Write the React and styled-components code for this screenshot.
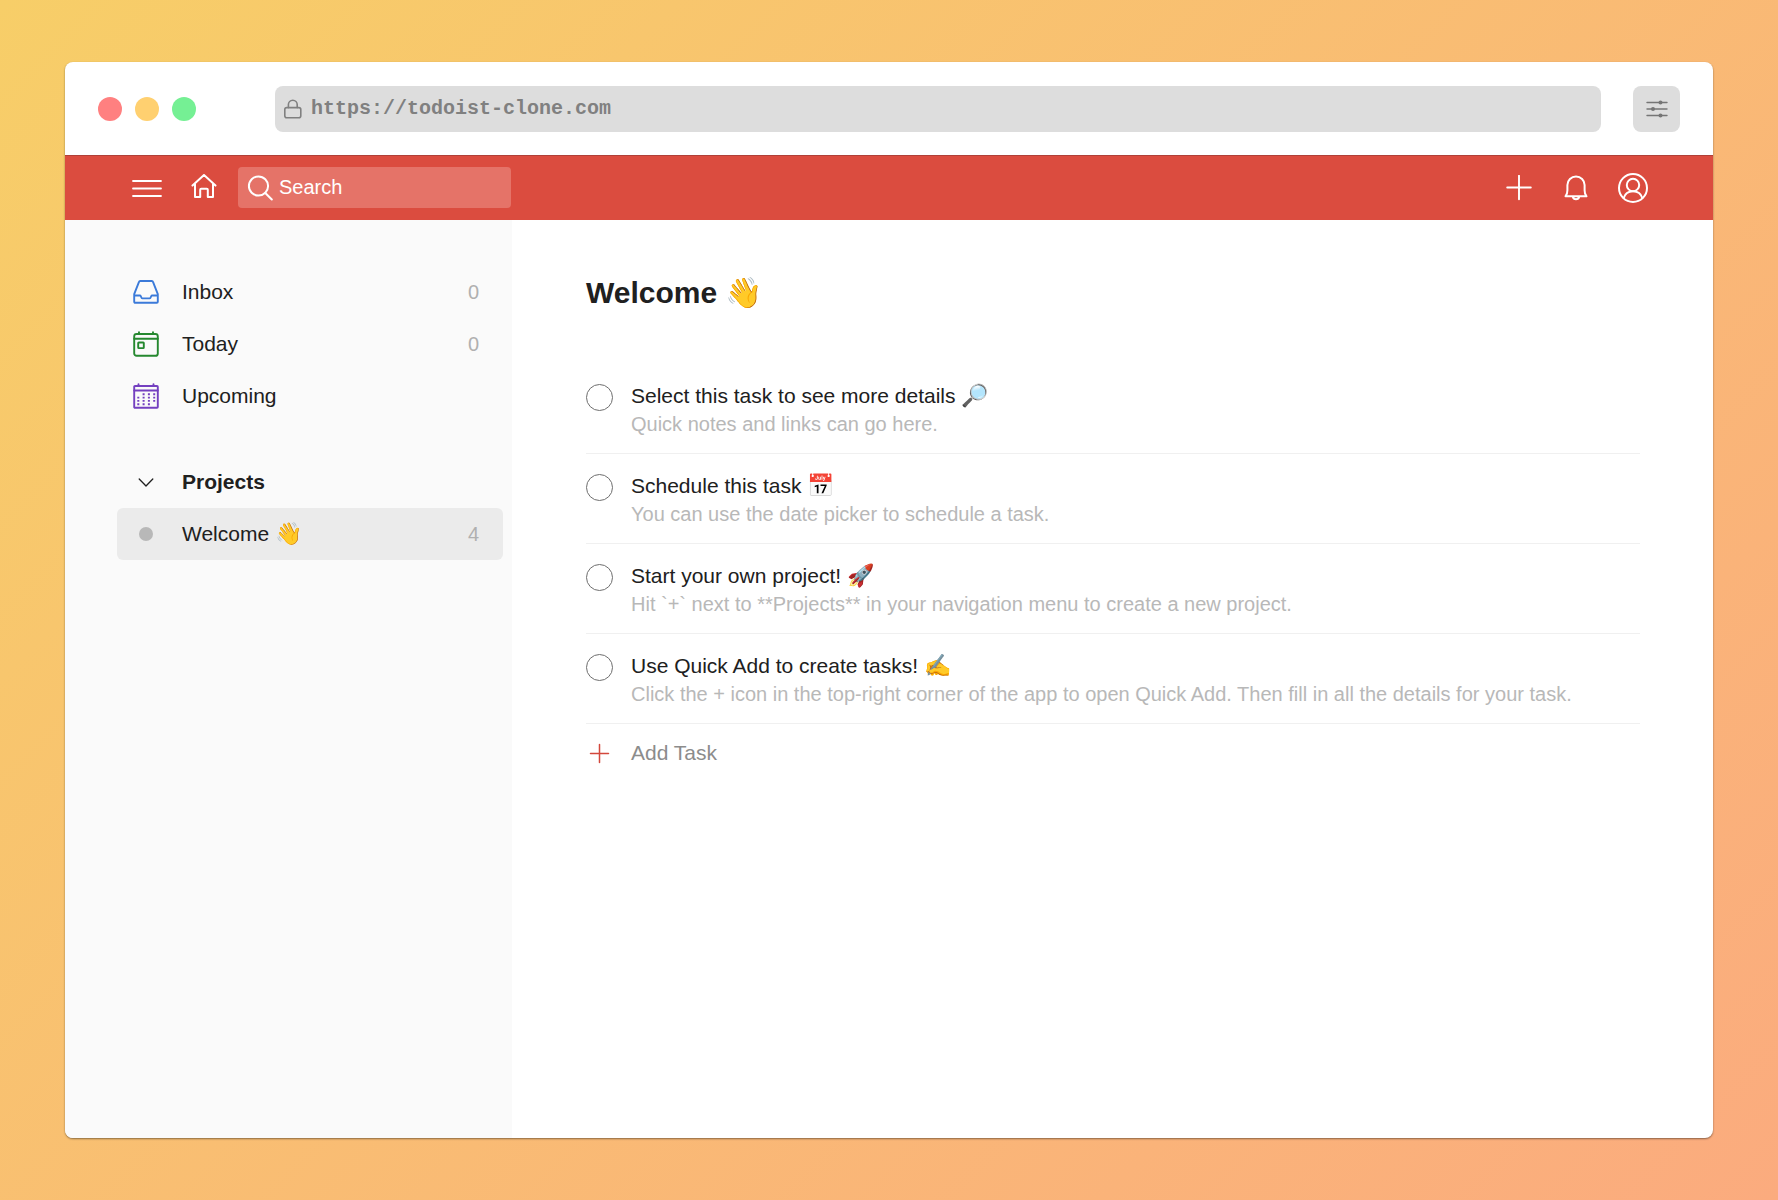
import React from "react";
import styled, { createGlobalStyle } from "styled-components";

const Global = createGlobalStyle`
  *, *::before, *::after { box-sizing: border-box; }
  body { margin: 0; font-family: "Liberation Sans", Arial, sans-serif; color: #202020; }
  button, input { font: inherit; color: inherit; }
  button { border: 0; padding: 0; background: none; cursor: pointer; }
  svg { display: block; }
`;

const Backdrop = styled.div`
  min-height: 100vh;
  padding: 62px 65px;
  display: flex;
  background: linear-gradient(135deg, #f7ce68 0%, #fbab7e 100%);
`;

const Window = styled.div`
  flex: 1;
  min-width: 0;
  display: flex;
  flex-direction: column;
  background: #fff;
  border-radius: 8px;
  overflow: hidden;
  box-shadow: 0 1px 2px rgba(0, 0, 0, 0.45);
`;

const Chrome = styled.div`
  height: 93px;
  padding: 0 33px;
  display: flex;
  align-items: center;
  gap: 32px;
`;

const Lights = styled.div`
  display: flex;
  gap: 13px;
  margin-right: 47px;
`;

const Light = styled.button`
  width: 24px;
  height: 24px;
  border-radius: 50%;
  background: ${(p) => p.$color};
`;

const AddressBar = styled.label`
  flex: 1;
  height: 46px;
  padding: 0 8px;
  display: flex;
  align-items: center;
  gap: 8px;
  background: #ddd;
  border-radius: 8px;
  color: #808080;
`;

const Address = styled.input`
  flex: 1;
  min-width: 0;
  border: 0;
  padding: 0;
  outline: 0;
  background: transparent;
  font-family: "Liberation Mono", "Courier New", monospace;
  font-size: 20px;
  font-weight: 700;
`;

const ChromeButton = styled.button`
  width: 47px;
  height: 46px;
  display: grid;
  place-items: center;
  background: #ddd;
  border-radius: 8px;
  color: #757575;
`;

const TopBar = styled.header`
  height: 65px;
  padding: 0 64px 0 66px;
  display: flex;
  align-items: center;
  background: #db4c3f;
  box-shadow: inset 0 1px 0 #b04038;
  color: #fff;
`;

const IconButton = styled.button`
  width: 32px;
  height: 32px;
  display: grid;
  place-items: center;
`;

const StartTools = styled.div`
  display: flex;
  align-items: center;
  gap: 25px;
`;

const EndTools = styled.div`
  margin-left: auto;
  display: flex;
  align-items: center;
  gap: 25px;
`;

const SearchBox = styled.label`
  width: 273px;
  height: 41px;
  margin-left: 18px;
  padding: 0 9px;
  display: flex;
  align-items: center;
  gap: 6px;
  background: #e57368;
  border-radius: 4px;
`;

const SearchInput = styled.input`
  flex: 1;
  min-width: 0;
  border: 0;
  padding: 0;
  outline: 0;
  background: transparent;
  font-size: 20px;
  &::placeholder { color: #fff; opacity: 1; }
`;

const Body = styled.div`
  flex: 1;
  display: flex;
`;

const Sidebar = styled.nav`
  width: 447px;
  flex-shrink: 0;
  padding: 46px 9px 0 52px;
  background: #fafafa;
`;

const NavList = styled.ul`
  margin: 0 0 34px;
  padding: 0;
  list-style: none;
`;

const NavLink = styled.a`
  height: 52px;
  padding: 0 24px 0 15px;
  display: grid;
  grid-template-columns: 28px 1fr auto;
  column-gap: 22px;
  align-items: center;
  border-radius: 6px;
  background: ${(p) => (p.$active ? "#ebebeb" : "transparent")};
  color: inherit;
  text-decoration: none;
  font-size: 21px;
  & > svg { justify-self: center; }
`;

const Count = styled.span`
  color: #b0b0b0;
  font-size: 20px;
`;

const SectionToggle = styled(NavLink).attrs({ as: "button", type: "button" })`
  width: 100%;
  text-align: left;
  font-weight: 700;
`;

const Dot = styled.span`
  width: 14px;
  height: 14px;
  justify-self: center;
  border-radius: 50%;
  background: #b8b8b8;
`;

const Emoji = styled.span`
  font-size: 22px;
  line-height: 1;
`;

const Main = styled.main`
  flex: 1;
  min-width: 0;
  padding: 53px 73px 0 74px;
`;

const Title = styled.h1`
  margin: 0 0 51px;
  font-size: 30px;
  line-height: 40px;
`;

const TaskList = styled.ul`
  margin: 0;
  padding: 0;
  list-style: none;
`;

const Task = styled.li`
  padding: 17px 0 14px;
  display: flex;
  align-items: flex-start;
  gap: 18px;
  border-bottom: 1px solid #f0f0f0;
`;

const Check = styled.input`
  appearance: none;
  width: 27px;
  height: 27px;
  margin: 3px 0 0;
  flex-shrink: 0;
  border: 1px solid #6e6e6e;
  border-radius: 50%;
`;

const TaskName = styled.label`
  display: block;
  font-size: 21px;
  line-height: 29px;
`;

const TaskNote = styled.p`
  margin: 0;
  color: #b8b8b8;
  font-size: 20px;
  line-height: 29px;
`;

const AddTask = styled.button`
  padding: 13px 0;
  display: flex;
  align-items: center;
  gap: 18px;
  color: #8c8c8c;
  font-size: 21px;
  line-height: 32px;
  & > svg { color: #d3483c; }
`;

const Line = ({ size = 26, w = 2, children, ...rest }) => (
  <svg width={size} height={size} viewBox={`0 0 ${size} ${size}`} fill="none" stroke="currentColor" strokeWidth={w} strokeLinejoin="round" strokeLinecap="round" aria-hidden="true" {...rest}>
    {children}
  </svg>
);

const LockIcon = () => (
  <Line size={20} w={1.6}>
    <rect x="1.8" y="8.6" width="16" height="10.2" rx="2" />
    <path d="M5.4 8.6V5.6a4.4 4.4 0 0 1 8.8 0v3" />
  </Line>
);

const SlidersIcon = () => (
  <Line size={22} w={1.4}>
    <path d="M1 4.500h20M1 11h20M1 17.500h20" />
    <g fill="currentColor" stroke="none">
      <circle cx="14.500" cy="4.500" r="2" />
      <circle cx="7" cy="11" r="2" />
      <circle cx="14.500" cy="17.500" r="2" />
    </g>
  </Line>
);

const MenuIcon = () => (
  <Line size={32} w={1.8}>
    <path d="M2 9h28M2 16.500h28M2 24h28" />
  </Line>
);

const HomeIcon = () => (
  <Line size={28} w={2}>
    <path d="M2.500 11.600 14 1l11.500 10.600M5 10v13h5.200v-7.300a1 1 0 0 1 1-1h5.600a1 1 0 0 1 1 1V23H23V10" />
  </Line>
);

const SearchIcon = () => (
  <Line size={26} w={2}>
    <circle cx="11.500" cy="11" r="9.600" />
    <path d="m18.300 18 6.500 6.500" />
  </Line>
);

const PlusIcon = () => (
  <Line size={26} w={1.9}>
    <path d="M13 .7v23.600M1.200 12.500h23.600" />
  </Line>
);

const BellIcon = () => (
  <Line size={28} w={2}>
    <path d="M3.500 22.300c1.400-1.300 1.900-3 1.900-6v-5.300a8.600 8.600 0 0 1 17.200 0v5.300c0 3 .5 4.700 1.900 6zM10.800 22.800a3.300 3.300 0 0 0 6.400 0" />
  </Line>
);

const UserIcon = () => (
  <Line size={32} w={2}>
    <circle cx="16" cy="16" r="14" />
    <circle cx="16" cy="13" r="6.200" />
    <path d="M6.700 26c1.200-4.200 4.300-6.800 9.300-6.800s8.100 2.600 9.300 6.800" />
  </Line>
);

const InboxIcon = () => (
  <Line size={26} w={1.9} color="#3b7ad9">
    <path d="M1.200 15.200 6 2.900c.2-.6.600-.9 1.200-.9h11.600c.6 0 1 .3 1.200.9l4.800 12.300v7.600a1 1 0 0 1-1 1H2.200a1 1 0 0 1-1-1zM1.200 16.500h6c.8 0 .9 2.900 2 2.900h7.600c1.100 0 1.200-2.900 2-2.900h6" />
  </Line>
);

const TodayIcon = () => (
  <Line size={26} w={1.9} color="#25882f">
    <rect x="1.200" y="3" width="23.600" height="21.800" rx="2.400" />
    <path d="M1.200 7.800h23.600M6 1.200v1.500M20 1.200v1.500" />
    <rect x="5.200" y="11.500" width="5.600" height="5.600" rx=".6" />
  </Line>
);

const UpcomingIcon = () => (
  <Line size={26} w={1.9} color="#7440c0">
    <rect x="1.200" y="3" width="23.600" height="21.800" rx=".8" />
    <path d="M1.200 7.500h23.600M5.500 1.200v1.500M20.500 1.200v1.500" />
    <path strokeLinecap="butt" strokeDasharray="2 3.300" d="M9.600 11.300h13M4.300 14.600h18.300M4.300 17.900h18.300M4.300 21.300h13" />
  </Line>
);

const ChevronIcon = () => (
  <Line size={16} w={1.300}>
    <path d="m1.200 5 6.800 7 6.800-7" />
  </Line>
);

const AddIcon = () => (
  <Line size={27} w={1.500}>
    <path d="M13.500 4.500v18M4.500 13.500h18" />
  </Line>
);

const NAV = [
  { name: "Inbox", Icon: InboxIcon, count: 0 },
  { name: "Today", Icon: TodayIcon, count: 0 },
  { name: "Upcoming", Icon: UpcomingIcon },
];

const TASKS = [
  { name: "Select this task to see more details", emoji: "🔎", note: "Quick notes and links can go here." },
  { name: "Schedule this task", emoji: "📅", note: "You can use the date picker to schedule a task." },
  { name: "Start your own project!", emoji: "🚀", note: "Hit `+` next to **Projects** in your navigation menu to create a new project." },
  { name: "Use Quick Add to create tasks!", emoji: "✍️", note: "Click the + icon in the top-right corner of the app to open Quick Add. Then fill in all the details for your task." },
];

export default function App() {
  return (
    <Backdrop>
      <Global />
      <Window>
        <Chrome>
          <Lights>
            <Light $color="#ff8080" aria-label="Close" />
            <Light $color="#ffd070" aria-label="Minimise" />
            <Light $color="#75f094" aria-label="Zoom" />
          </Lights>
          <AddressBar>
            <LockIcon />
            <Address type="text" aria-label="Address" defaultValue="https://todoist-clone.com" />
          </AddressBar>
          <ChromeButton aria-label="Settings"><SlidersIcon /></ChromeButton>
        </Chrome>
        <TopBar>
          <StartTools>
            <IconButton aria-label="Menu"><MenuIcon /></IconButton>
            <IconButton aria-label="Home"><HomeIcon /></IconButton>
          </StartTools>
          <SearchBox>
            <SearchIcon />
            <SearchInput type="text" aria-label="Search" placeholder="Search" />
          </SearchBox>
          <EndTools>
            <IconButton aria-label="Quick add"><PlusIcon /></IconButton>
            <IconButton aria-label="Notifications"><BellIcon /></IconButton>
            <IconButton aria-label="Account"><UserIcon /></IconButton>
          </EndTools>
        </TopBar>
        <Body>
          <Sidebar aria-label="Navigation">
            <NavList>
              {NAV.map(({ name, Icon, count }) => (
                <li key={name}>
                  <NavLink href="#">
                    <Icon />
                    <span>{name}</span>
                    {count !== undefined && <Count>{count}</Count>}
                  </NavLink>
                </li>
              ))}
            </NavList>
            <SectionToggle aria-expanded="true">
              <ChevronIcon />
              <span>Projects</span>
            </SectionToggle>
            <NavList>
              <li>
                <NavLink href="#" $active>
                  <Dot />
                  <span>Welcome <Emoji>👋</Emoji></span>
                  <Count>4</Count>
                </NavLink>
              </li>
            </NavList>
          </Sidebar>
          <Main>
            <Title>Welcome 👋</Title>
            <TaskList>
              {TASKS.map((t, i) => (
                <Task key={t.name}>
                  <Check type="checkbox" id={`task-${i}`} />
                  <div>
                    <TaskName htmlFor={`task-${i}`}>{t.name} <Emoji>{t.emoji}</Emoji></TaskName>
                    <TaskNote>{t.note}</TaskNote>
                  </div>
                </Task>
              ))}
            </TaskList>
            <AddTask type="button">
              <AddIcon />
              Add Task
            </AddTask>
          </Main>
        </Body>
      </Window>
    </Backdrop>
  );
}
